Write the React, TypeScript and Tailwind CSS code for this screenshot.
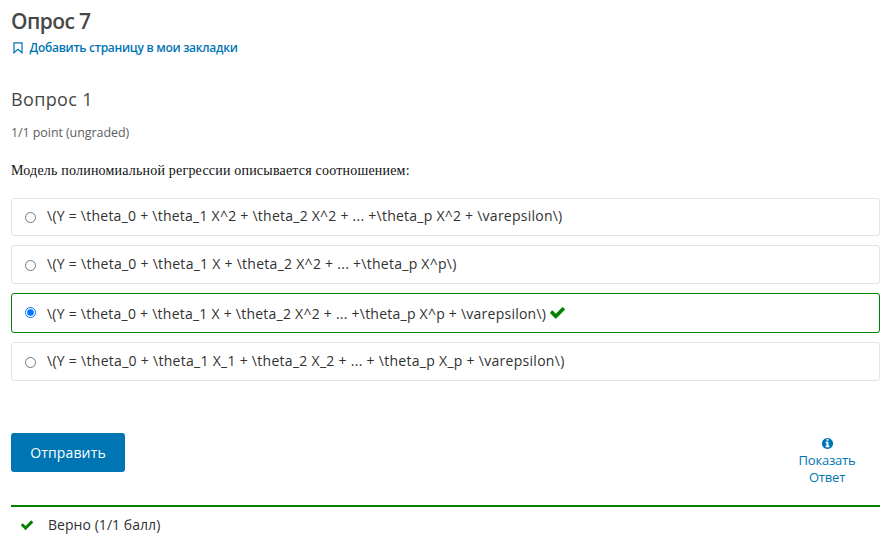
import React from 'react';

type Option = { text: string; box: string; label: string; radio: string; checked?: boolean };

const options: Option[] = [
  { text: '\\(Y = \\theta_0 + \\theta_1 X^2 + \\theta_2 X^2 + ... +\\theta_p X^2 + \\varepsilon\\)', box: 'h-[38px] mb-[9px] border-[#e3e3e3]', label: 'pt-[7px] tracking-[0.245px]', radio: 'mt-[13px]' },
  { text: '\\(Y = \\theta_0 + \\theta_1 X + \\theta_2 X^2 + ... +\\theta_p X^p\\)', box: 'h-[39px] mb-[9px] border-[#e3e3e3]', label: 'pt-[8px] tracking-[0.27px]', radio: 'mt-[14px]' },
  { text: '\\(Y = \\theta_0 + \\theta_1 X + \\theta_2 X^2 + ... +\\theta_p X^p + \\varepsilon\\)', box: 'h-[40px] mb-[9px] border-[#008100]', label: 'pt-[10px] tracking-[0.24px]', radio: 'mt-[13px]', checked: true },
  { text: '\\(Y = \\theta_0 + \\theta_1 X_1 + \\theta_2 X_2 + ... + \\theta_p X_p + \\varepsilon\\)', box: 'h-[39px] border-[#e3e3e3]', label: 'pt-[8px] tracking-[0.285px]', radio: 'mt-[14px]' },
];

function Check({ className }: { className: string }) {
  return (
    <svg viewBox="0 0 1792 1792" fill="#008100" className={className} aria-hidden="true">
      <path d="M1671 566q0 40-28 68l-724 724-136 136q-28 28-68 28t-68-28l-136-136-362-362q-28-28-28-68t28-68l136-136q28-28 68-28t68 28l294 295 656-657q28-28 68-28t68 28l136 136q28 28 28 68z" />
    </svg>
  );
}

function Info() {
  return (
    <svg viewBox="0 0 1792 1792" fill="currentColor" className="h-[13px] w-[13px]" aria-hidden="true">
      <path d="M1152 1376v-160q0-14-9-23t-23-9h-96v-512q0-14-9-23t-23-9h-320q-14 0-23 9t-9 23v160q0 14 9 23t23 9h96v320h-96q-14 0-23 9t-9 23v160q0 14 9 23t23 9h448q14 0 23-9t9-23zm-128-896v-160q0-14-9-23t-23-9h-192q-14 0-23 9t-9 23v160q0 14 9 23t23 9h192q14 0 23-9t9-23zm640 416q0 209-103 385.5t-279.5 279.5-385.5 103-385.5-103-279.5-279.5-103-385.5 103-385.5 279.5-279.5 385.5-103 385.5 103 279.5 279.5 103 385.5z" />
    </svg>
  );
}

export default function App() {
  return (
    <main className="flex h-[549px] w-[890px] flex-col overflow-hidden bg-white pl-[11px] pr-[10px] font-['Open_Sans','Noto_Sans',sans-serif] text-[#313131]">
      <h1 className="mt-[6px] h-[30px] whitespace-nowrap text-[21px] font-semibold leading-[30px] tracking-[-0.6px] text-[#474747]">Опрос 7</h1>
      <a className="mt-[3px] flex h-[18px] items-center whitespace-nowrap text-[12px] font-semibold leading-[18px] text-[#0075b4]">
        <svg viewBox="0 0 10 12" className="ml-[1.5px] mr-[7px] h-[12px] w-[10px] shrink-0" fill="none" stroke="currentColor" strokeWidth="1.2">
          <path d="M1 .8h8v10L5 7.2l-4 3.6z" />
        </svg>
        <span className="tracking-[-0.28px]">Добавить страницу в мои закладки</span>
      </a>
      <h2 className="mt-[29px] h-[27px] whitespace-nowrap text-[18px] leading-[27px] tracking-[0.35px] text-[#474747]">Вопрос 1</h2>
      <div className="mt-[11px] h-[18px] whitespace-nowrap text-[12.5px] leading-[18px] tracking-[-0.08px] text-[#5e5e5e]">1/1 point (ungraded)</div>
      <p className="mt-[19px] h-[20px] whitespace-nowrap font-['Liberation_Serif',serif] text-[14px] leading-[20px] tracking-[0.2px] text-[#111]">Модель полиномиальной регрессии описывается соотношением:</p>
      <fieldset className="mt-[17px] flex flex-col">
        {options.map((o) => (
          <label key={o.text} className={`flex items-start rounded-[3px] border pl-[13px] ${o.box}`}>
            <input type="radio" name="answer" defaultChecked={o.checked} className={`h-[11px] w-[11px] shrink-0 ${o.radio}`} />
            <span className={`ml-[11px] whitespace-nowrap text-[14px] leading-[20px] ${o.label}`}>{o.text}</span>
            {o.checked && <Check className="ml-[3px] mt-[10px] h-[17px] w-[17px]" />}
          </label>
        ))}
      </fieldset>
      <div className="mt-[52px] flex h-[72px] items-start justify-between">
        <button className="h-[39px] w-[114px] whitespace-nowrap rounded-[3px] bg-[#0075b4] text-[14px] font-medium leading-[20px] tracking-[0.15px] text-white">Отправить</button>
        <button className="mr-[20px] flex w-[66px] flex-col items-center pt-[4px] text-[13px] leading-[17px] tracking-[-0.2px] text-[#0075b4]">
          <Info />
          <span className="mt-[2px] whitespace-nowrap">Показать</span>
          <span>Ответ</span>
        </button>
      </div>
      <div className="flex h-[38px] items-center border-t-2 border-[#008100] pl-[9px]">
        <Check className="h-[14px] w-[14px]" />
        <span className="ml-[14px] whitespace-nowrap text-[14px] leading-[20px] tracking-[0.05px]">Верно (1/1 балл)</span>
      </div>
    </main>
  );
}
